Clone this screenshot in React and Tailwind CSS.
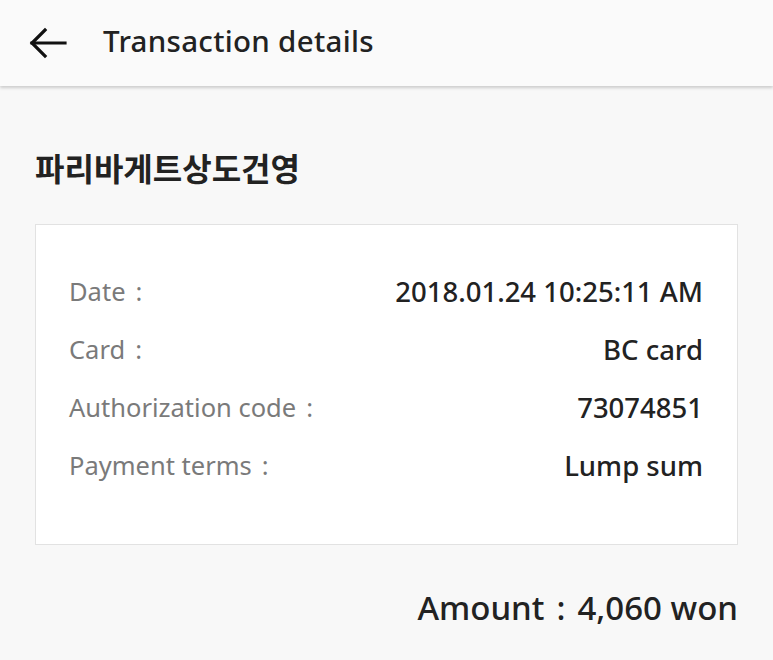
export default function App() {
  const rows = [
    ["Date", "2018.01.24 10:25:11 AM"],
    ["Card", "BC card"],
    ["Authorization code", "73074851"],
    ["Payment terms", "Lump sum"],
  ];
  return (
    <div
      className="w-[773px] h-[660px] bg-[#f8f8f8] overflow-hidden"
      style={{ fontFamily: '"Noto Sans", "Noto Sans CJK KR", sans-serif' }}
    >
      <div className="h-[86px] bg-[#fafafa] flex items-center shadow-[0_2px_3px_rgba(0,0,0,0.18)] relative z-10">
        <svg className="ml-[29px] w-[38px] h-[32px]" viewBox="0 0 38 32" fill="none" stroke="#111" strokeWidth="3.2" strokeLinecap="square">
          <path d="M3 16 H36" />
          <path d="M16 3 L3 16 L16 29" />
        </svg>
        <div className="ml-[36px] text-[29.5px] text-[#222] font-medium tracking-[0.3px] leading-none pb-[5px]">Transaction details</div>
      </div>
      <div className="px-[35px]">
        <div
          className="mt-[65px] text-[32px] font-bold text-[#222] leading-none"
          style={{ fontFamily: '"Noto Sans CJK KR", sans-serif' }}
        >
          파리바게트상도건영
        </div>
        <div className="mt-[41px] h-[321px] bg-white border border-[#e2e2e2] pl-[33px] pr-[34px] pt-[47px] flex flex-col gap-[18px]">
          {rows.map(([k, v]) => (
            <div key={k} className="flex justify-between items-center h-[40px] leading-none">
              <span className="text-[#7a7a7a] text-[25.5px]">{k}<span className="ml-[10px]">:</span></span>
              <span className="text-[#222] font-medium text-[27.5px]">{v}</span>
            </div>
          ))}
        </div>
        <div className="mt-[46px] text-right text-[33px] text-[#222] font-medium leading-none">
          Amount<span className="mx-[12px]">:</span>4,060 won
        </div>
      </div>
    </div>
  );
}
